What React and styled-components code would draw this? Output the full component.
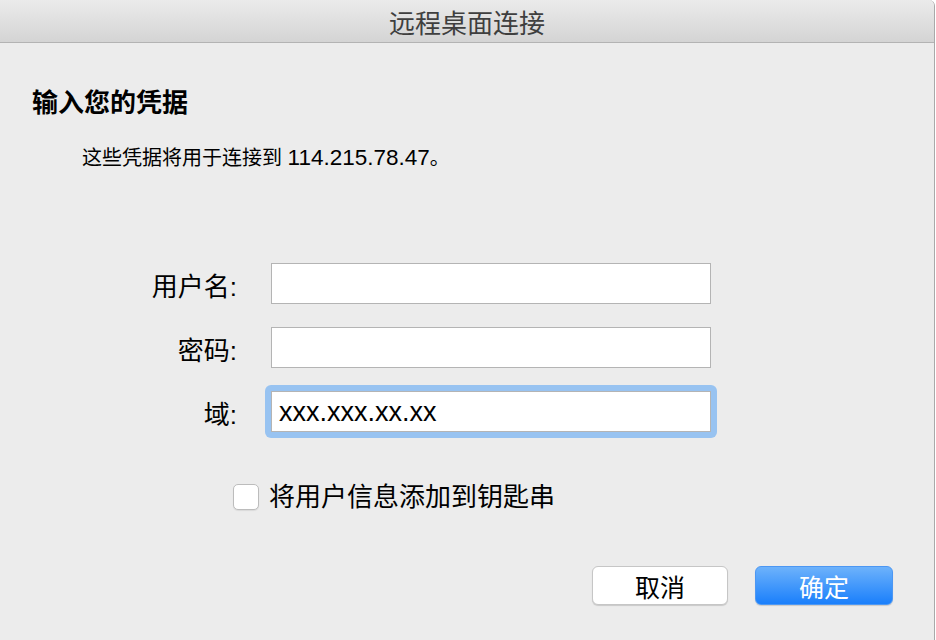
import styled, { createGlobalStyle } from 'styled-components';

const GlobalStyle = createGlobalStyle`
  body {
    margin: 0;
    background: #ffffff;
    font-family: "Liberation Sans", "Noto Sans CJK SC", sans-serif;
    overflow: hidden;
  }
`

function App() {
  return (
    <>
      <GlobalStyle />
      <Window>
        <TitleBar>远程桌面连接</TitleBar>
        <Body>
          <Heading>输入您的凭据</Heading>
          <Subtitle>这些凭据将用于连接到 <Addr>114.215.78.47</Addr>。</Subtitle>
          <Form>
            <Label>用户名:</Label>
            <Field />
            <Label>密码:</Label>
            <Field type='password' />
            <Label>域:</Label>
            <FocusRing>
              <Field defaultValue='xxx.xxx.xx.xx' />
            </FocusRing>
          </Form>
          <CheckRow>
            <CheckBox />
            <CheckLabel>将用户信息添加到钥匙串</CheckLabel>
          </CheckRow>
          <ButtonRow>
            <Button>取消</Button>
            <Button primary>确定</Button>
          </ButtonRow>
        </Body>
      </Window>
    </>
  )
}

const Window = styled.div`
  width: 934px;
  height: 640px;
  background: #ececec;
  border-right: 1px solid #a9a9a9;
  border-top-right-radius: 6px;
  overflow: hidden;
  display: flex;
  flex-direction: column;
`

const TitleBar = styled.div`
  height: 42px;
  border-bottom: 1px solid #b3b3b3;
  background: linear-gradient(#ebebeb, #d4d4d4);
  display: flex;
  align-items: center;
  justify-content: center;
  font-size: 26px;
  color: #3f3f3f;
  flex-shrink: 0;
`

const Body = styled.div`
  display: flex;
  flex-direction: column;
  padding-top: 45px;
`

const Heading = styled.div`
  font-size: 26px;
  line-height: 30px;
  font-weight: 700;
  color: #000;
  padding-left: 32px;
`

const Subtitle = styled.div`
  margin-top: 28px;
  padding-left: 82px;
  font-size: 20px;
  line-height: 24px;
  color: #000;
`

const Addr = styled.span`
  font-size: 22.5px;
`

const Form = styled.div`
  margin-top: 93px;
  display: grid;
  grid-template-columns: 237px 440px;
  column-gap: 34px;
  row-gap: 23px;
  align-items: center;
`

const Label = styled.div`
  text-align: right;
  font-size: 26px;
  line-height: 30px;
  color: #000;
  padding-top: 6px;
`

const Field = styled.input.attrs({ type: 'text' })`
  box-sizing: border-box;
  width: 440px;
  height: 41px;
  margin: 0;
  border: 1px solid #b4b4b4;
  background: #fff;
  outline: none;
  padding: 2px 7px 0;
  font-family: "Liberation Sans", "Noto Sans CJK SC", sans-serif;
  font-size: 27px;
  color: #000;
`

const FocusRing = styled.div`
  margin: -6px;
  padding: 6px;
  background: #98c3f1;
  border-radius: 6px;
  width: 440px;
  height: 41px;
  display: flex;
`

const CheckRow = styled.div`
  margin-top: 50px;
  padding-left: 233px;
  display: flex;
  align-items: center;
  gap: 10px;
`

const CheckBox = styled.div`
  box-sizing: border-box;
  width: 26px;
  height: 26px;
  border: 1px solid #bcbcbc;
  border-radius: 5px;
  background: #fff;
  box-shadow: 0 1px 1px rgba(0, 0, 0, 0.08);
`

const CheckLabel = styled.div`
  font-size: 26px;
  line-height: 30px;
  color: #000;
`

const ButtonRow = styled.div`
  margin-top: 54px;
  display: flex;
  justify-content: flex-end;
  gap: 27px;
  padding-right: 41px;
`

const Button = styled.div`
  box-sizing: border-box;
  width: ${props => props.primary ? '138px' : '136px'};
  height: 39px;
  border-radius: 6px;
  display: flex;
  align-items: center;
  justify-content: center;
  font-size: 25px;
  color: ${props => props.primary ? '#fff' : '#000'};
  background: ${props => props.primary ? 'linear-gradient(#6db2fb, #1a7ffb)' : '#fff'};
  border: 1px solid ${props => props.primary ? '#4c97f3' : '#c6c6c6'};
  box-shadow: 0 1px 1px rgba(0, 0, 0, 0.15);
`

export default App
